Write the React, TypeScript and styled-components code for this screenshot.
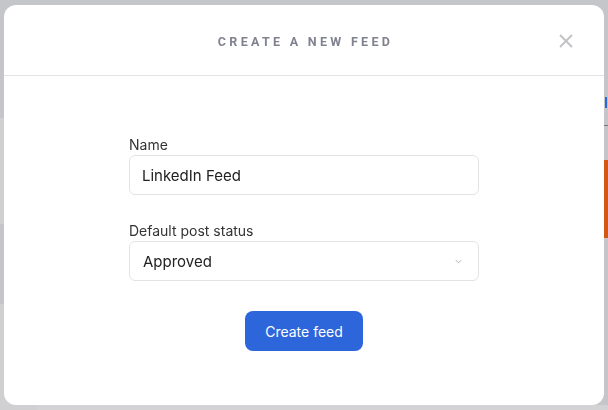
import styled, { createGlobalStyle } from 'styled-components';

const GlobalStyle = createGlobalStyle`
  * { box-sizing: border-box; }
  html, body { margin: 0; padding: 0; }
  body {
    font-family: Inter, "Noto Sans", "Liberation Sans", sans-serif;
    background: #c5c6ca;
    overflow: hidden;
  }
`;

// dimmed app behind the modal
const Shell = styled.div`
  width: 608px;
  height: 410px;
  display: flex;
  background: #c5c6ca;
`;

const LeftRail = styled.div`
  width: 37px;
  display: flex;
  flex-direction: column;
  padding-top: 118px;
  gap: 80px;
`;

const RailBlock = styled.div`
  height: 120px;
  background: #d0d0d3;
`;

const Main = styled.div`
  flex: 1;
  display: flex;
  justify-content: flex-end;
  border-bottom: 5px solid #d3d3d5;
`;

const SideCol = styled.div`
  width: 80px;
  display: flex;
  flex-direction: column;
  align-items: flex-end;
  padding-top: 97px;
`;

const BlueMark = styled.div`
  width: 2px;
  height: 11px;
  margin-right: 1px;
  background: #2d66db;
`;

const Muted = styled.div`
  width: 4px;
  height: 1px;
  margin-top: 17px;
  background: #777;
`;

const OrangeCard = styled.div`
  width: 80px;
  height: 78px;
  margin-top: 34px;
  background: #d35817;
`;

const Overlay = styled.div`
  position: fixed;
  inset: 0;
  padding: 5px 4px;
  display: flex;
`;

const Modal = styled.div`
  flex: 1;
  background: #fff;
  border-radius: 12px;
  display: flex;
  flex-direction: column;
  overflow: hidden;
`;

const Header = styled.div`
  height: 71px;
  border-bottom: 1px solid #e4e4e8;
  display: flex;
  align-items: center;
  justify-content: center;
  position: relative;
`;

const Title = styled.h2`
  margin: 0;
  font-family: Roboto, "Liberation Sans", sans-serif;
  font-size: 12.5px;
  font-weight: 700;
  letter-spacing: 3.3px;
  color: #80838f;
  padding-left: 3px;
  margin-top: 3px;
`;

const Close = styled.button`
  position: absolute;
  right: 30px;
  top: 28px;
  width: 16px;
  height: 16px;
  padding: 0;
  border: 0;
  background: none;
  color: #c3c3c7;
  cursor: pointer;
  display: flex;
`;

const Body = styled.div`
  flex: 1;
  display: flex;
  justify-content: center;
  padding-top: 60px;
`;

const Form = styled.form`
  width: 350px;
  display: flex;
  flex-direction: column;
`;

const Field = styled.div`
  display: flex;
  flex-direction: column;
  gap: 2px;
  margin-bottom: 27px;
`;

const Label = styled.label`
  font-size: 14px;
  color: #333;
  line-height: 17px;
`;

const Input = styled.input`
  height: 40px;
  border: 1px solid #e3e3e7;
  border-radius: 6px;
  padding: 0 12px;
  font: inherit;
  font-size: 15px;
  color: #222;
  outline: none;
`;

const Select = styled.div`
  height: 40px;
  border: 1px solid #e3e3e7;
  border-radius: 6px;
  padding: 0 13px;
  font-size: 15px;
  color: #222;
  display: flex;
  align-items: center;
  justify-content: space-between;
`;

const Chevron = styled.svg`
  width: 9px;
  height: 9px;
  margin-right: 2px;
  color: #aaa;
`;

const Actions = styled.div`
  display: flex;
  justify-content: center;
  margin-top: 3px;
`;

const Button = styled.button`
  width: 118px;
  height: 40px;
  border: 0;
  border-radius: 8px;
  background: #2d66db;
  color: #fff;
  font: inherit;
  font-size: 14px;
  cursor: pointer;
`;

export default function App() {
  return (
    <>
      <GlobalStyle />
      <Shell>
        <LeftRail>
          <RailBlock />
          <RailBlock />
        </LeftRail>
        <Main>
          <SideCol>
            <BlueMark />
            <Muted />
            <OrangeCard />
          </SideCol>
        </Main>
      </Shell>
      <Overlay>
        <Modal>
          <Header>
            <Title>CREATE A NEW FEED</Title>
            <Close aria-label="Close">
              <svg width="16" height="16" viewBox="0 0 16 16">
                <path d="M2 2 L14 14 M14 2 L2 14" stroke="currentColor" strokeWidth="2" />
              </svg>
            </Close>
          </Header>
          <Body>
            <Form onSubmit={(e) => e.preventDefault()}>
              <Field>
                <Label>Name</Label>
                <Input defaultValue="LinkedIn Feed" />
              </Field>
              <Field>
                <Label>Default post status</Label>
                <Select>
                  Approved
                  <Chevron viewBox="0 0 10 10">
                    <path d="M2 3.5 L5 6.5 L8 3.5" fill="none" stroke="currentColor" strokeWidth="1" />
                  </Chevron>
                </Select>
              </Field>
              <Actions>
                <Button type="submit">Create feed</Button>
              </Actions>
            </Form>
          </Body>
        </Modal>
      </Overlay>
    </>
  );
}
